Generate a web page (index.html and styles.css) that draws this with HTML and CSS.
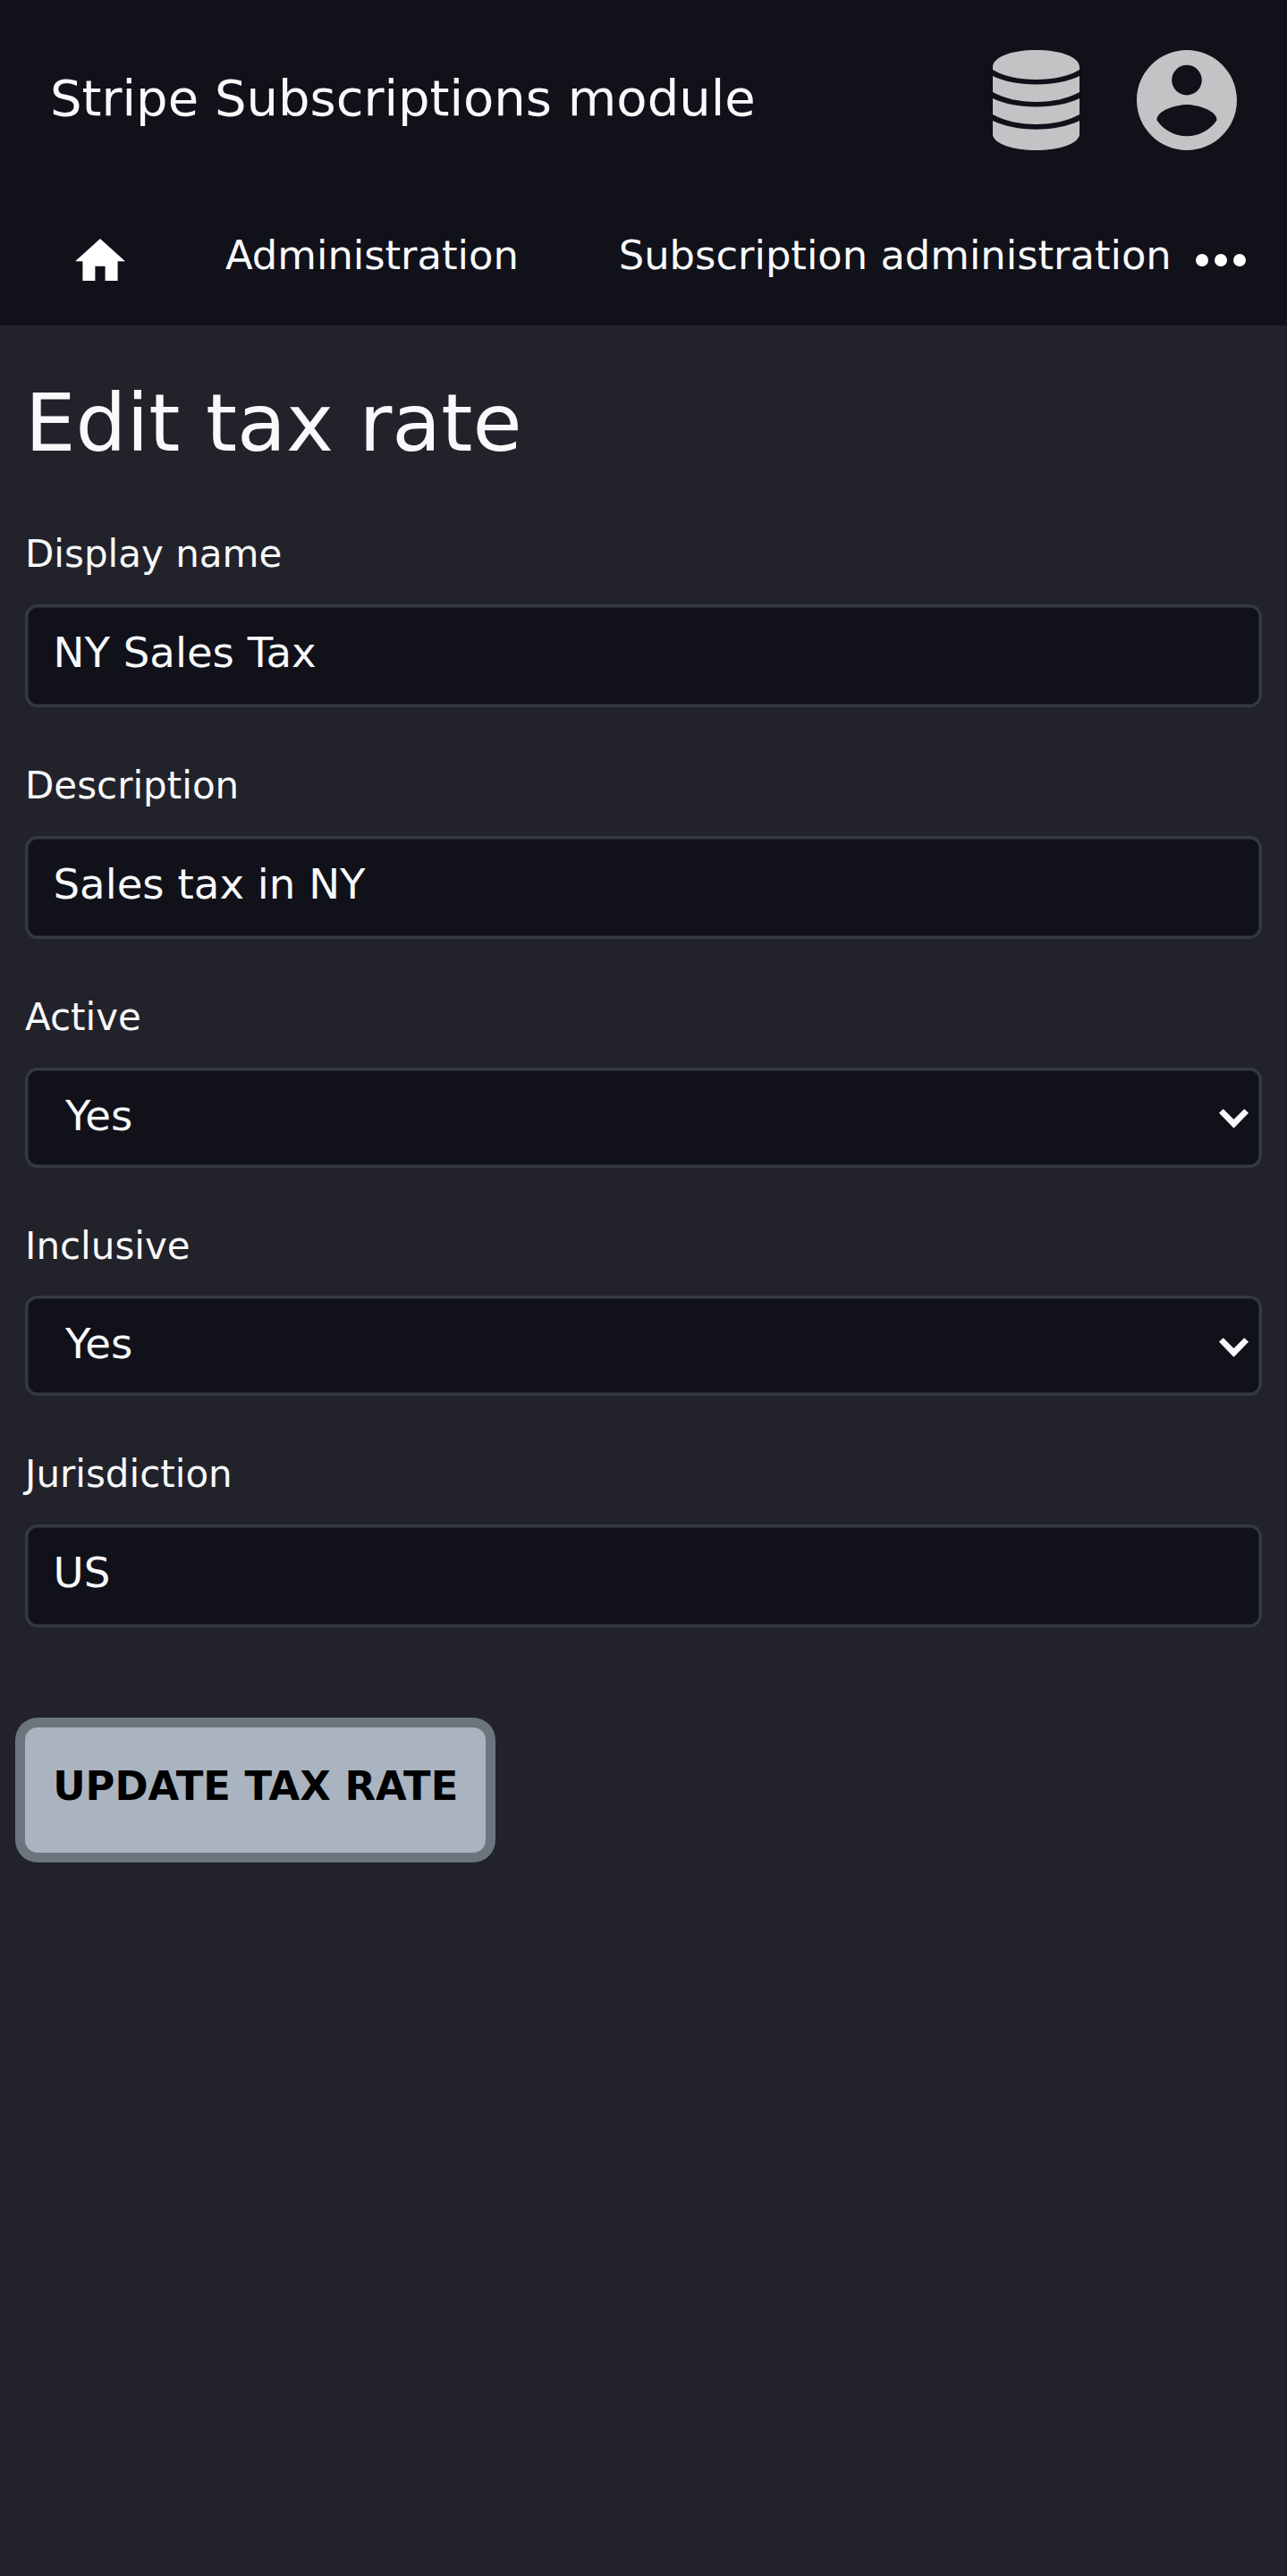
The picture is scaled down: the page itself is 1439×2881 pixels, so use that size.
FILE: index.html
```html
<!DOCTYPE html>
<html lang="en">
<head>
<meta charset="utf-8">
<title>Edit tax rate</title>
<link rel="stylesheet" href="styles.css">
</head>
<body>
<header class="header">
  <div class="topbar">
    <div class="brand">Stripe Subscriptions module</div>
    <svg class="icon-db" viewBox="0 0 97 112"><path d="M0 19C0 8 20 0 48.500 0S97 8 97 19V22C84 29.500 68 33 48.500 33S13 29.500 0 22ZM0 29C13 35 29 38.500 48.500 38.500S84 35 97 29V47C84 54 68 58 48.500 58S13 54 0 47ZM0 54C13 60 29 63.500 48.500 63.500S84 60 97 54V72C84 79 68 83 48.500 83S13 79 0 72ZM0 79C13 85 29 88.700 48.500 88.700S84 85 97 79V95C95 105 75 112 48.500 112S2 105 0 95Z"/></svg>
    <svg class="icon-user" viewBox="2 2 20 20"><path d="M12 2C6.480 2 2 6.480 2 12s4.480 10 10 10 10-4.480 10-10S17.520 2 12 2zm0 3c1.660 0 3 1.340 3 3s-1.340 3-3 3-3-1.340-3-3 1.340-3 3-3zm0 14.200c-2.500 0-4.710-1.280-6-3.220.03-1.990 4-3.080 6-3.080s5.970 1.090 6 3.080c-1.290 1.940-3.500 3.220-6 3.220z"/></svg>
  </div>
  <nav class="nav">
    <svg class="icon-home" viewBox="2 3 20 17"><path d="M10 20v-6h4v6h5v-8h3L12 3 2 12h3v8z"/></svg>
    <a class="nav-link">Administration</a>
    <a class="nav-link">Subscription administration</a>
    <svg class="icon-more" viewBox="0 0 56 14"><circle cx="7" cy="7" r="7"/><circle cx="28" cy="7" r="7"/><circle cx="49" cy="7" r="7"/></svg>
  </nav>
</header>
<main class="content">
  <h1 class="heading">Edit tax rate</h1>
  <form class="form">
    <div class="field"><label class="label" for="name">Display name</label><input class="input" id="name" value="NY Sales Tax"></div>
    <div class="field"><label class="label" for="desc">Description</label><input class="input" id="desc" value="Sales tax in NY"></div>
    <div class="field"><label class="label" for="active">Active</label>
      <div class="select-wrap"><select class="select" id="active"><option>Yes</option><option>No</option></select><svg class="arrow" viewBox="0 0 32 21"><path d="M0 4.500 4.600 0 16 11.400 27.400 0 32 4.500 16 21Z"/></svg></div></div>
    <div class="field"><label class="label" for="inclusive">Inclusive</label>
      <div class="select-wrap"><select class="select" id="inclusive"><option>Yes</option><option>No</option></select><svg class="arrow" viewBox="0 0 32 21"><path d="M0 4.500 4.600 0 16 11.400 27.400 0 32 4.500 16 21Z"/></svg></div></div>
    <div class="field"><label class="label" for="juris">Jurisdiction</label><input class="input" id="juris" value="US"></div>
    <button class="button" type="button">UPDATE TAX RATE</button>
  </form>
</main>
</body>
</html>
```
FILE: styles.css
```css
* { box-sizing: border-box; }
body {
  margin: 0;
  min-height: 2881px;
  background: #22222a;
  color: #f8f9fa;
  font-family: "DejaVu Sans", sans-serif;
}
svg { display: block; flex: none; }
.header { height: 364px; background: #11111a; }
.topbar {
  display: flex;
  align-items: center;
  height: 224px;
  padding: 0 56px;
}
.brand { flex: 1; padding-bottom: 4px; font-size: 56px; line-height: 84px; }
.icon-db { width: 97px; height: 112px; margin-right: 64px; fill: #c3c3c5; }
.icon-user { width: 112px; height: 112px; fill: #c3c3c5; }
.nav {
  display: flex;
  align-items: flex-start;
  height: 140px;
  padding-left: 84px;
}
.icon-home { width: 56px; height: 47.6px; margin: 42.5px 112px 0 0; fill: #fff; }
.nav-link {
  margin: 28px 112px 0 0;
  font-size: 44.8px;
  line-height: 67px;
  white-space: nowrap;
}
.nav-link + .nav-link { margin-right: 0; }
.icon-more { width: 56px; height: 14px; margin: 59.5px 46px 0 auto; fill: #fff; }
.content { padding: 57px 28px 0; }
.heading {
  margin: 0;
  font-size: 89.6px;
  font-weight: 400;
  line-height: 104px;
}
.form { padding-top: 63px; }
.field { margin-bottom: 56px; }
.label {
  display: block;
  height: 87.5px;
  font-size: 42px;
  line-height: 63px;
}
.input, .select {
  display: block;
  width: 100%;
  margin: 0;
  border: 3px solid #343a40;
  border-radius: 14px;
  background: #11111a;
  box-shadow: inset 0 0 0 0.5px #343a40;
  color: #f8f9fa;
  font: 46.667px "DejaVu Sans", sans-serif;
  outline: 0;
}
.input { height: 115.5px; padding: 0 28.5px 7px; }
.select { height: 112px; padding: 0 42px 4px; appearance: none; }
.select-wrap { position: relative; }
.arrow {
  position: absolute;
  top: 46.5px;
  right: 15.5px;
  width: 33px;
  height: 22px;
  fill: #f8f9fa;
  pointer-events: none;
}
.button {
  display: block;
  width: 514.5px;
  height: 140px;
  margin: 112px 0 0;
  padding: 0 0 9px 1px;
  border: 0;
  border-radius: 14px;
  background: #a9b4c0;
  box-shadow: 0 0 0 11px #6c757d;
  color: #000;
  font: bold 44.8px "DejaVu Sans", sans-serif;
}
```
